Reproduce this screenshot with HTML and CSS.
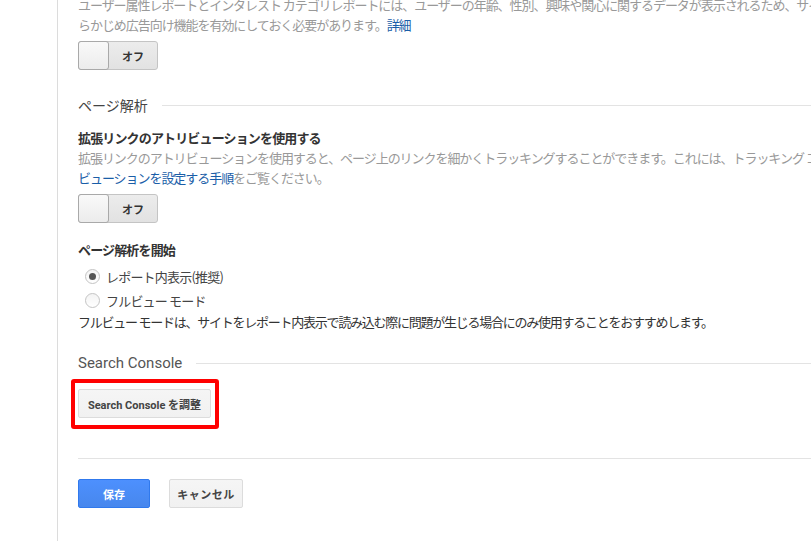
FILE: index.html
```html
<!DOCTYPE html>
<html lang="ja">
<head>
<meta charset="utf-8">
<link rel="stylesheet" href="styles.css">
</head>
<body>
<div class="page">
  <div class="gutter"></div>
  <main class="content">
    <p class="desc first">ユーザー属性レポートとインタレスト カテゴリレポートには、ユーザーの年齢、性別、興味や関心に関するデータが表示されるため、サイト<br>らかじめ広告向け機能を有効にしておく必要があります。<a class="link" href="#">詳細</a></p>
    <div class="toggle"><span class="knob"></span><span class="toggle-label">オフ</span></div>

    <div class="section-head"><span class="section-title">ページ解析</span><span class="rule"></span></div>

    <h3 class="field-title">拡張リンクのアトリビューションを使用する</h3>
    <p class="desc">拡張リンクのアトリビューションを使用すると、ページ上のリンクを細かくトラッキングすることができます。これには、トラッキング コードに小<br><a class="link" href="#">ビューションを設定する手順</a>をご覧ください。</p>
    <div class="toggle"><span class="knob"></span><span class="toggle-label">オフ</span></div>

    <h3 class="field-title start">ページ解析を開始</h3>
    <div class="radios">
      <label class="radio-row"><span class="radio checked"></span><span class="radio-label">レポート内表示(推奨)</span></label>
      <label class="radio-row"><span class="radio"></span><span class="radio-label">フルビュー モード</span></label>
    </div>
    <p class="note">フルビュー モードは、サイトをレポート内表示で読み込む際に問題が生じる場合にのみ使用することをおすすめします。</p>

    <div class="section-head sc"><span class="section-title latin">Search Console</span><span class="rule"></span></div>
    <div class="highlight-wrap">
      <button class="btn">Search Console を調整</button>
    </div>

    <div class="divider"></div>
    <div class="actions">
      <button class="btn btn-primary">保存</button>
      <button class="btn btn-cancel">キャンセル</button>
    </div>
  </main>
</div>
</body>
</html>
```

FILE: styles.css
```css
html, body {
  margin: 0;
  padding: 0;
  background: #fff;
  overflow: hidden;
}
body {
  font-family: "Noto Sans CJK JP", "Liberation Sans", sans-serif;
  font-size: 13px;
  color: #333;
}
.page {
  display: flex;
  min-height: 541px;
}
.gutter {
  width: 57px;
  flex: none;
  border-right: 1px solid #dcdcdc;
}
.content {
  flex: 1;
  padding-left: 20px;
  min-width: 0;
  overflow: hidden;
}
.desc {
  margin: 0;
  line-height: 20px;
  color: #999;
  white-space: nowrap;
  letter-spacing: -1.05px;
}
.desc.first {
  margin-top: -5px;
}
.link {
  color: #1a5ea8;
  text-decoration: none;
}
.toggle {
  margin-top: 6px;
  width: 78px;
  height: 27px;
  border: 1px solid #c4c4c4;
  border-radius: 3px;
  background: linear-gradient(#ececec, #e2e2e2);
  display: flex;
  align-items: stretch;
}
.knob {
  width: 29px;
  border: 1px solid #a9a9a9;
  margin: -1px 0 -1px -1px;
  border-radius: 3px;
  background: linear-gradient(#f9f9f9, #ececec);
}
.toggle-label {
  flex: 1;
  display: flex;
  align-items: center;
  justify-content: center;
  font-size: 11px;
  font-weight: bold;
  color: #333;
}
.section-head {
  display: flex;
  align-items: center;
  margin-top: 25px;
  height: 20px;
}
.section-title {
  font-size: 14px;
  color: #444;
  white-space: nowrap;
}
.section-title.latin {
  font-family: Roboto, "Liberation Sans", sans-serif;
  font-size: 15px;
  color: #555;
}
.rule {
  flex: 1;
  height: 1px;
  background: #e3e3e3;
  margin-left: 14px;
}
.field-title {
  margin: 13px 0 0;
  font-size: 13px;
  line-height: 20px;
  font-weight: bold;
  color: #333;
  letter-spacing: -0.85px;
}
.field-title.start {
  margin-top: 17px;
}
.radios {
  margin-top: 4px;
}
.radio-row {
  display: flex;
  align-items: center;
  height: 24px;
  padding-left: 7px;
  gap: 6px;
}
.radio {
  width: 13px;
  height: 13px;
  border: 1px solid #c4c4c4;
  border-radius: 50%;
  background: linear-gradient(#f3f3f3, #fff);
  position: relative;
  flex: none;
}
.radio.checked::after {
  content: "";
  position: absolute;
  left: 3px;
  top: 3px;
  width: 7px;
  height: 7px;
  border-radius: 50%;
  background: #555;
}
.radio-label {
  font-size: 13px;
  color: #444;
  letter-spacing: -0.8px;
}
.note {
  margin: 0;
  line-height: 20px;
  color: #333;
  white-space: nowrap;
  letter-spacing: -1.25px;
}
.section-head.sc {
  margin-top: 21px;
}
.highlight-wrap {
  margin-top: 16px;
  position: relative;
  display: inline-block;
}
.highlight-wrap::after {
  content: "";
  position: absolute;
  left: -7px;
  right: -8px;
  top: -10px;
  bottom: -11px;
  border: 4px solid #ff0000;
  border-radius: 3px;
  pointer-events: none;
}
.btn {
  display: block;
  height: 29px;
  padding: 0;
  border: 1px solid #dcdcdc;
  border-radius: 2px;
  background: linear-gradient(#f5f5f5, #f1f1f1);
  font-family: Roboto, "Noto Sans CJK JP", sans-serif;
  font-size: 11px;
  font-weight: bold;
  color: #444;
  width: 133px;
  white-space: nowrap;
  box-sizing: border-box;
}
.divider {
  margin-top: 40px;
  height: 1px;
  background: #e3e3e3;
}
.actions {
  display: flex;
  gap: 19px;
  margin-top: 20px;
}
.btn-primary {
  width: 72px;
  border-color: #3079ed;
  background: linear-gradient(#4d90fe, #4787ed);
  color: #fff;
  font-family: "Noto Sans CJK JP", sans-serif;
}
.btn-cancel {
  width: 74px;
  font-family: "Noto Sans CJK JP", sans-serif;
  letter-spacing: 0.5px;
}
```
